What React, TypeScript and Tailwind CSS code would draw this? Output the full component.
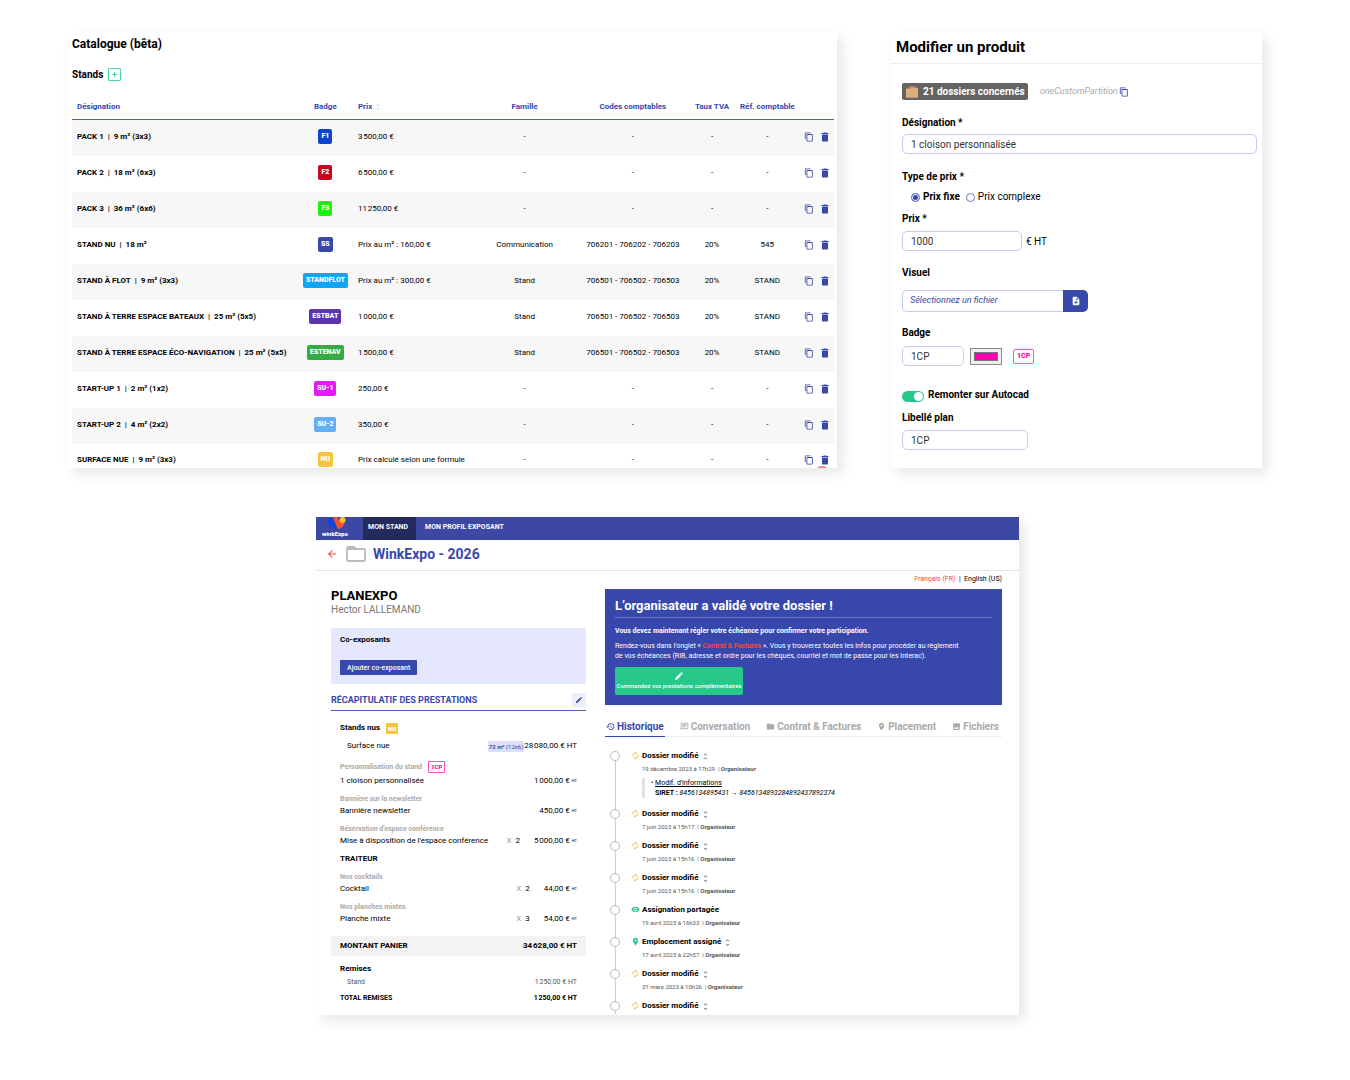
import React from 'react';
import {
  MdAdd,
  MdArrowBack,
  MdAutorenew,
  MdDelete,
  MdEdit,
  MdFolder,
  MdHistory,
  MdImage,
  MdNoteAdd,
  MdOutlineChat,
  MdOutlineContentCopy,
  MdPlace,
  MdUnfoldLess,
  MdUnfoldMore,
  MdVisibility,
} from 'react-icons/md';

const card = 'bg-white overflow-hidden shadow-[6px_6px_12px_rgba(0,0,0,0.09)]';

const stands = [
  { name: 'PACK 1', size: '9 m² (3x3)', badge: 'F1', color: 'bg-[#0b46cc]', price: '3\u200a500,00 €' },
  { name: 'PACK 2', size: '18 m² (6x3)', badge: 'F2', color: 'bg-[#c8061f]', price: '6\u200a500,00 €' },
  { name: 'PACK 3', size: '36 m² (6x6)', badge: 'F3', color: 'bg-[#1df20d]', price: '11\u200a250,00 €' },
  { name: 'STAND NU', size: '18 m²', badge: 'SS', color: 'bg-[#3747ac]', price: 'Prix au m² : 160,00 €', family: 'Communication', codes: '706201 - 706202 - 706203', vat: '20%', ref: '545' },
  { name: 'STAND À FLOT', size: '9 m² (3x3)', badge: 'STANDFLOT', color: 'bg-[#0ea5f5]', price: 'Prix au m² : 300,00 €', family: 'Stand', codes: '706501 - 706502 - 706503', vat: '20%', ref: 'STAND' },
  { name: 'STAND À TERRE ESPACE BATEAUX', size: '25 m² (5x5)', badge: 'ESTBAT', color: 'bg-[#5b34b0]', price: '1\u200a000,00 €', family: 'Stand', codes: '706501 - 706502 - 706503', vat: '20%', ref: 'STAND' },
  { name: 'STAND À TERRE ESPACE ÉCO-NAVIGATION', size: '25 m² (5x5)', badge: 'ESTENAV', color: 'bg-[#35ab43]', price: '1\u200a500,00 €', family: 'Stand', codes: '706501 - 706502 - 706503', vat: '20%', ref: 'STAND' },
  { name: 'START-UP 1', size: '2 m² (1x2)', badge: 'SU-1', color: 'bg-[#e01df5]', price: '250,00 €' },
  { name: 'START-UP 2', size: '4 m² (2x2)', badge: 'SU-2', color: 'bg-[#64aef7]', price: '350,00 €' },
  { name: 'SURFACE NUE', size: '9 m² (3x3)', badge: 'NU', color: 'bg-[#f5c63c]', price: 'Prix calculé selon une formule' },
];

const Catalogue: React.FC = () => (
  <section className={`${card} relative flex-[762] min-w-0 pt-1 pl-[5px] pr-[3px]`}>
    <h1 className="text-[12px] leading-4 font-bold">Catalogue (bêta)</h1>
    <div className="mt-[14px] flex items-center gap-[5px] h-4">
      <h2 className="text-[10px] font-bold">Stands</h2>
      <button aria-label="Ajouter un stand" className="w-[13px] h-[13px] border border-[#4fd3a0] rounded-[1px] text-[#27c98a] flex items-center justify-center">
        <MdAdd size={9} />
      </button>
    </div>

    <table className="mt-4 w-full table-fixed border-collapse text-[8px] leading-4 whitespace-nowrap text-center">
      <colgroup>
        <col className="w-[29.5%]" />
        <col className="w-[7.5%]" />
        <col className="w-[15.9%]" />
        <col className="w-[13%]" />
        <col className="w-[15.4%]" />
        <col className="w-[5.4%]" />
        <col className="w-[9.1%]" />
        <col className="w-[4.2%]" />
      </colgroup>
      <thead>
        <tr className="text-[#3747ac] font-bold [&>th]:border-b [&>th]:border-[#4f5dbb]">
          <th className="text-left pl-[5px] pt-px pb-1">Désignation</th>
          <th className="pt-px pb-1">Badge</th>
          <th className="text-left pl-1 pt-px pb-1">
            <span className="inline-flex items-center gap-0.5">Prix <MdUnfoldMore size={8} className="text-gray-300" /></span>
          </th>
          <th className="pt-px pb-1">Famille</th>
          <th className="pt-px pb-1">Codes comptables</th>
          <th className="pt-px pb-1">Taux TVA</th>
          <th className="pt-px pb-1">Réf. comptable</th>
          <th aria-label="Actions" />
        </tr>
      </thead>
      <tbody>
        {stands.map((s) => (
          <tr key={s.name} className="odd:bg-[#f7f7f7] [&>td]:pt-[9px] [&>td]:pb-[11px] last:[&>td]:pt-2 last:[&>td]:pb-0">
            <td className="text-left pl-[5px] font-bold">{s.name}&nbsp; | &nbsp;{s.size}</td>
            <td>
              <span className={`${s.color} inline-block px-[3px] h-[15px] leading-[15px] rounded-[2px] text-white text-[7px] font-black align-middle`}>
                {s.badge}
              </span>
            </td>
            <td className="text-left pl-1">{s.price}</td>
            <td>{s.family ?? '-'}</td>
            <td>{s.codes ?? '-'}</td>
            <td>{s.vat ?? '-'}</td>
            <td>{s.ref ?? '-'}</td>
            <td>
              <div className="flex justify-end items-center gap-[5px] pr-[3px] text-[#3747ac]">
                <button aria-label="Dupliquer"><MdOutlineContentCopy size={10} /></button>
                <button aria-label="Supprimer"><MdDelete size={12} /></button>
              </div>
            </td>
          </tr>
        ))}
      </tbody>
    </table>

    {/* Floating action button, only its top edge shows */}
    <button aria-label="Actions" className="absolute right-[7px] -bottom-[14px] w-4 h-4 rounded-full bg-[#f58080]" />
  </section>
);

const field = 'h-5 border border-[#c5cbf0] rounded-[5px] px-2 text-[10px] text-[#333] bg-white';
const label = 'block text-[10px] leading-4 font-bold';
const radio = 'appearance-none w-[9px] h-[9px] rounded-full border border-[#6674cc] checked:bg-[#3747ac] checked:shadow-[inset_0_0_0_1px_white]';

const ProductForm: React.FC = () => (
  <section className={`${card} flex-[371] min-w-0 border-l border-[#fafafa]`}>
    <h1 className="h-8 pl-[5px] leading-[31px] text-[15px] font-bold border-b border-[#eee]">Modifier un produit</h1>
    <form className="pt-[19px] pl-[11px] pr-[5px] pb-[18px] text-[10px]">
      <div className="flex items-center h-[17px]">
        <span className="flex items-center gap-[5px] h-full pl-1 pr-[3px] bg-[#646464] rounded-[2px] text-white font-bold whitespace-nowrap">
          <svg width="12" height="12" viewBox="0 0 12 12">
            <path d="M1.5 2.5 3 .6h6.5l1 2z" fill="#b98a5c" />
            <path d="M3 0h1.6v2.6H3z" fill="#e25b5b" />
            <path d="M5.2 0h1.6v2.6H5.2z" fill="#8d9bd8" />
            <path d="M7.5 0h1.6v2.6H7.5z" fill="#e25b5b" />
            <path d="M0 2.5h5l1-.7h5.2l.8.9V11a.8.8 0 0 1-.8.8H.8A.8.8 0 0 1 0 11z" fill="#dcae7c" />
          </svg>
          21 dossiers concernés
        </span>
        <span className="ml-3 text-[9px] italic text-[#aaa]">oneCustomPartition</span>
        <button type="button" aria-label="Copier" className="ml-px text-[#3747ac]"><MdOutlineContentCopy size={10} /></button>
      </div>

      <label htmlFor="designation" className={`${label} mt-[15px]`}>Désignation *</label>
      <input id="designation" className={`${field} mt-[3px] block w-full`} defaultValue="1 cloison personnalisée" />

      <fieldset className="mt-[15px]">
        <legend className={label}>Type de prix *</legend>
        <div className="mt-1 ml-[9px] flex items-center gap-1.5 leading-4">
          <label className="flex items-center gap-[3px] font-bold">
            <input type="radio" name="type" defaultChecked className={radio} />
            Prix fixe
          </label>
          <label className="flex items-center gap-[3px]">
            <input type="radio" name="type" className={radio} />
            Prix complexe
          </label>
        </div>
      </fieldset>

      <label htmlFor="price" className={`${label} mt-1.5`}>Prix *</label>
      <div className="mt-1 flex items-center gap-1">
        <input id="price" className={`${field} w-[120px]`} defaultValue="1000" />
        <span>€ HT</span>
      </div>

      <label htmlFor="visual" className={`${label} mt-[14px]`}>Visuel</label>
      <div className="mt-[9px] flex h-[22px] w-[186px]">
        <input id="visual" readOnly placeholder="Sélectionnez un fichier" className="min-w-0 flex-1 border border-r-0 border-[#c5cbf0] rounded-l-[5px] px-[7px] text-[9px] italic placeholder:text-[#3747ac]" />
        <button type="button" aria-label="Choisir un fichier" className="w-[25px] bg-[#3747ac] rounded-r-[5px] text-white flex items-center justify-center">
          <MdNoteAdd size={10} />
        </button>
      </div>

      <label htmlFor="badge" className={`${label} mt-[13px]`}>Badge</label>
      <div className="mt-[5px] flex items-center">
        <input id="badge" className={`${field} w-[62px]`} defaultValue="1CP" />
        <input type="color" aria-label="Couleur du badge" defaultValue="#ff00aa" className="ml-1.5 w-8 h-[17px] border border-[#8a8a8a] bg-[#efefef] [&::-webkit-color-swatch-wrapper]:p-[3px]" />
        <span className="ml-[11px] px-[3px] h-[15px] leading-[13px] border border-[#ff4fc4] rounded-[2px] text-[#ff00aa] text-[7px] font-black">1CP</span>
      </div>

      <label className="mt-[21px] flex items-center gap-1 leading-4 font-bold">
        <input type="checkbox" defaultChecked className="appearance-none w-[22px] h-[11px] mt-0.5 p-px rounded-full bg-gray-300 checked:bg-[#27c98a] flex checked:justify-end before:block before:w-[9px] before:h-[9px] before:rounded-full before:bg-white" />
        Remonter sur Autocad
      </label>

      <label htmlFor="plan" className={`${label} mt-[7px]`}>Libellé plan</label>
      <input id="plan" className={`${field} mt-1 block w-[126px]`} defaultValue="1CP" />
    </form>
  </section>
);

const Price: React.FC<{ name: string; qty?: number; price: string }> = ({ name, qty, price }) => (
  <div className="flex text-[8px]">
    <span>{name}</span>
    {qty && <span className="ml-auto"><span className="text-[#999]">X</span>&nbsp; {qty}</span>}
    <span className={qty ? 'ml-[14px]' : 'ml-auto'}>{price} <span className="text-[4px] align-[1px]">HT</span></span>
  </div>
);

const group = 'mt-1.5 font-bold text-[#aaa]';

const Summary: React.FC = () => (
  <div className="flex-[255] min-w-0 pt-[17px] pb-[11px] text-[7px] leading-3">
    <h2 className="text-[13px] leading-4 font-bold">PLANEXPO</h2>
    <p className="text-[10px] leading-3 text-[#777]">Hector LALLEMAND</p>

    <div className="mt-3 pt-1.5 pb-[9px] px-[9px] bg-[#e5e7ff] rounded-[2px]">
      <h3 className="text-[8px] font-bold">Co-exposants</h3>
      <button className="mt-[14px] block h-[15px] px-[7px] bg-[#3747ac] text-white rounded-[1px] font-medium">Ajouter co-exposant</button>
    </div>

    <div className="mt-2 pb-0.5 flex items-center justify-between border-b border-[#4f5dbb] text-[#3747ac]">
      <h3 className="text-[9px] leading-4 font-bold">RÉCAPITULATIF DES PRESTATIONS</h3>
      <button aria-label="Modifier" className="w-[14px] h-[14px] bg-[#eceefa] flex items-center justify-center"><MdEdit size={8} /></button>
    </div>

    <div className="px-[9px] pt-[11px]">
      <h4 className="flex items-center gap-[6px] text-[8px] font-bold">
        Stands nus
        <span className="px-[2px] h-[11px] leading-[11px] bg-[#f5c63c] text-white text-[6px] font-black rounded-[1px]">NU</span>
      </h4>
      <div className="mt-1.5 pl-[7px] flex items-center text-[8px]">
        <span>Surface nue</span>
        <span className="ml-auto px-px h-[11px] leading-[11px] bg-[#dcdff5] text-[#3747ac] text-[6px] rounded-[1px]"><b>72 m²</b> (12x6)</span>
        <span className="whitespace-nowrap">28&#8202;080,00 € HT</span>
      </div>
      <h4 className="mt-[9px] flex items-center gap-[6px] font-bold text-[#aaa]">
        Personnalisation du stand
        <span className="px-[2px] h-3 leading-[10px] border border-[#ff4fc4] rounded-[1px] text-[#ff00aa] text-[6px] font-black">1CP</span>
      </h4>
      <div className="mt-0.5">
        <Price name="1 cloison personnalisée" price={'1\u200a000,00 €'} />
      </div>
      <h4 className={group}>Bannière sur la newsletter</h4>
      <Price name="Bannière newsletter" price="450,00 €" />
      <h4 className={group}>Réservation d'espace conférence</h4>
      <Price name="Mise à disposition de l'espace conférence" qty={2} price={'5\u200a000,00 €'} />
      <h3 className="mt-1.5 text-[8px] font-bold">TRAITEUR</h3>
      <h4 className={group}>Nos cocktails</h4>
      <Price name="Cocktail" qty={2} price="44,00 €" />
      <h4 className={group}>Nos planches mixtes</h4>
      <Price name="Planche mixte" qty={3} price="54,00 €" />
    </div>

    <div className="mt-[11px] px-[9px] h-5 flex items-center justify-between bg-[#f3f3f3] text-[8px] font-bold">
      <span>MONTANT PANIER</span>
      <span>34&#8202;628,00 € HT</span>
    </div>
    <div className="px-[9px] pt-[7px]">
      <h3 className="text-[8px] font-bold">Remises</h3>
      <div className="mt-px pl-[7px] flex justify-between text-[#555]"><span>Stand</span><span>1&#8202;250,00 € HT</span></div>
      <div className="mt-1 flex justify-between font-bold"><span>TOTAL REMISES</span><span>1&#8202;250,00 € HT</span></div>
    </div>
  </div>
);

const tabs = [
  { name: 'Historique', icon: MdHistory },
  { name: 'Conversation', icon: MdOutlineChat },
  { name: 'Contrat & Factures', icon: MdFolder },
  { name: 'Placement', icon: MdPlace },
  { name: 'Fichiers', icon: MdImage },
];

const events = [
  { title: 'Dossier modifié', date: '19 décembre 2023 à 17h29', icon: MdAutorenew, color: 'text-[#fbb52c]', open: true, fold: true },
  { title: 'Dossier modifié', date: '7 juin 2023 à 15h17', icon: MdAutorenew, color: 'text-[#fbb52c]', fold: true },
  { title: 'Dossier modifié', date: '7 juin 2023 à 15h16', icon: MdAutorenew, color: 'text-[#fbb52c]', fold: true },
  { title: 'Dossier modifié', date: '7 juin 2023 à 15h16', icon: MdAutorenew, color: 'text-[#fbb52c]', fold: true },
  { title: 'Assignation partagée', date: '19 avril 2023 à 16h33', icon: MdVisibility, color: 'text-[#27c98a]' },
  { title: 'Emplacement assigné', date: '17 avril 2023 à 22h57', icon: MdPlace, color: 'text-[#27c98a]', fold: true },
  { title: 'Dossier modifié', date: '31 mars 2023 à 10h26', icon: MdAutorenew, color: 'text-[#fbb52c]', fold: true },
  { title: 'Dossier modifié', icon: MdAutorenew, color: 'text-[#fbb52c]', fold: true },
];

const Activity: React.FC = () => (
  <div className="flex-[397] min-w-0">
    <div className="h-[18px] leading-4 text-right text-[7px]">
      <a href="#fr" className="text-[#f04a3c]">Français (FR)</a>&nbsp; | &nbsp;<a href="#en">English (US)</a>
    </div>

    <div className="bg-[#3747ac] text-white px-[10px] pt-[9px] pb-[10px] text-[7px] leading-[10px]">
      <h2 className="text-[13px] leading-4 pb-[3px] font-bold border-b border-[#6b78cc]">L’organisateur a validé votre dossier !</h2>
      <p className="mt-2 font-bold">Vous devez maintenant régler votre échéance pour confirmer votre participation.</p>
      <p className="mt-[5px] pr-8">
        Rendez-vous dans l'onglet « <b className="text-[#f04a3c]">Contrat & Factures</b> ». Vous y trouverez toutes les infos pour procéder au règlement de vos échéances (RIB, adresse et ordre pour les chèques, courriel et mot de passe pour les Interac).
      </p>
      <button className="mt-1.5 h-7 w-32 bg-[#27c98a] rounded-[2px] flex flex-col items-center justify-center text-[6px] leading-[10px] font-medium whitespace-nowrap">
        <MdEdit size={10} />
        Commandez vos prestations complémentaires
      </button>
    </div>

    <div className="mt-3 flex justify-between border-b border-[#eee] pr-0.5 text-[10px] leading-[19px] font-bold text-[#aaa] whitespace-nowrap">
      {tabs.map(({ name, icon: Icon }) => (
        <button key={name} className="flex items-center gap-0.5 px-px border-b border-transparent first:border-[#3747ac] first:text-[#3747ac] -mb-px">
          <Icon size={9} />
          {name}
        </button>
      ))}
    </div>

    <ol className="mt-[14px]">
      {events.map(({ title, date, icon: Icon, color, open, fold }, i) => (
        <li key={i} className="flex">
          <div className="w-5 flex flex-col items-center">
            <span className="w-[10px] h-[10px] shrink-0 rounded-full border border-[#bbb] bg-white" />
            <span className="flex-1 w-px bg-[#ccc]" />
          </div>
          <Icon size={9} className={`${color} ml-[6px] shrink-0`} />
          <div className={date ? 'ml-0.5 pb-[9px]' : 'ml-0.5 pb-[3px]'}>
            <h3 className="flex items-center gap-0.5 text-[8px] leading-[10px] font-bold">
              {title}
              {fold && (open ? <MdUnfoldLess size={9} className="text-[#777]" /> : <MdUnfoldMore size={9} className="text-[#777]" />)}
            </h3>
            {date && <p className="mt-[3px] text-[6px] leading-[10px] text-[#555]">{date}&nbsp; | <b>Organisateur</b></p>}
            {open && (
              <div className="mt-1 mb-0.5 pl-[10px] border-l-[3px] border-[#e3e3e3] text-[7px] leading-[10px]">
                <p className="-indent-1">• <u>Modif. d'informations</u></p>
                <p><b>SIRET :</b> <i>8456134895431 → 8456134893284892437892374</i></p>
              </div>
            )}
          </div>
        </li>
      ))}
    </ol>
  </div>
);

const Folder: React.FC = () => (
  <section className={card}>
    <nav className="h-[23px] flex items-stretch bg-[#3c48a3] text-white text-[7px] font-bold">
      <a href="#home" className="w-[47px] pl-[6px] flex flex-col items-start">
        <svg width="28" height="14" viewBox="0 0 28 14">
          <path d="M4.500 2 9.800.5c1 3 2.400 5.500 5.200 7.500-.3 2-1.200 3.800-3 4C8.500 12 5.500 6.500 4.500 2z" fill="#1745d8" />
          <path d="M11.500 0h4c.3 2 1.500 3.600 3.500 4.800l3.800 1.200c-1 2.800-3 5-5 5.800-1.800.4-2.800-1-3.600-3.300C13.200 6 12 3 11.500 0z" fill="#f0532f" />
          <circle cx="20.500" cy="3" r="3" fill="#fac42f" />
        </svg>
        <span className="text-[6px] leading-[6px] font-black">winkExpo</span>
      </a>
      <a href="#stand" className="pl-[5px] pr-2 leading-5 bg-[#222a5e]">MON STAND</a>
      <a href="#profil" className="px-[9px] leading-5">MON PROFIL EXPOSANT</a>
    </nav>
    <header className="h-[31px] pl-[10px] pb-[2px] flex items-center border-b border-[#e3e3e3]">
      <a href="#back" aria-label="Retour" className="text-[#f04a3c]"><MdArrowBack size={12} /></a>
      <svg width="20" height="16" viewBox="0 0 20 16" fill="none" className="ml-2">
        <path d="M1 2.500V13.500Q1 15 2.500 15H17.500Q19 15 19 13.500V4.500Q19 3 17.500 3H10L8 1H2.500Q1 1 1 2.500z" stroke="#bbb" strokeWidth="1.800" />
        <path d="M1 1.500h7l2 2.500H1z" fill="#bbb" />
      </svg>
      <h1 className="ml-[7px] text-[14px] font-bold text-[#3747ac]">WinkExpo - 2026</h1>
    </header>
    <div className="flex gap-[19px] pl-[15px] pr-[17px]">
      <Summary />
      <Activity />
    </div>
  </section>
);

const App: React.FC = () => (
  <main className="min-h-screen bg-white pt-8 pb-16 pl-[67px] pr-[88px] font-[Roboto,sans-serif] text-black">
    <div className="flex items-start gap-[53px]">
      <Catalogue />
      <ProductForm />
    </div>
    <div className="mt-[49px] pl-[249px] pr-[243px]">
      <Folder />
    </div>
  </main>
);

export default App;
